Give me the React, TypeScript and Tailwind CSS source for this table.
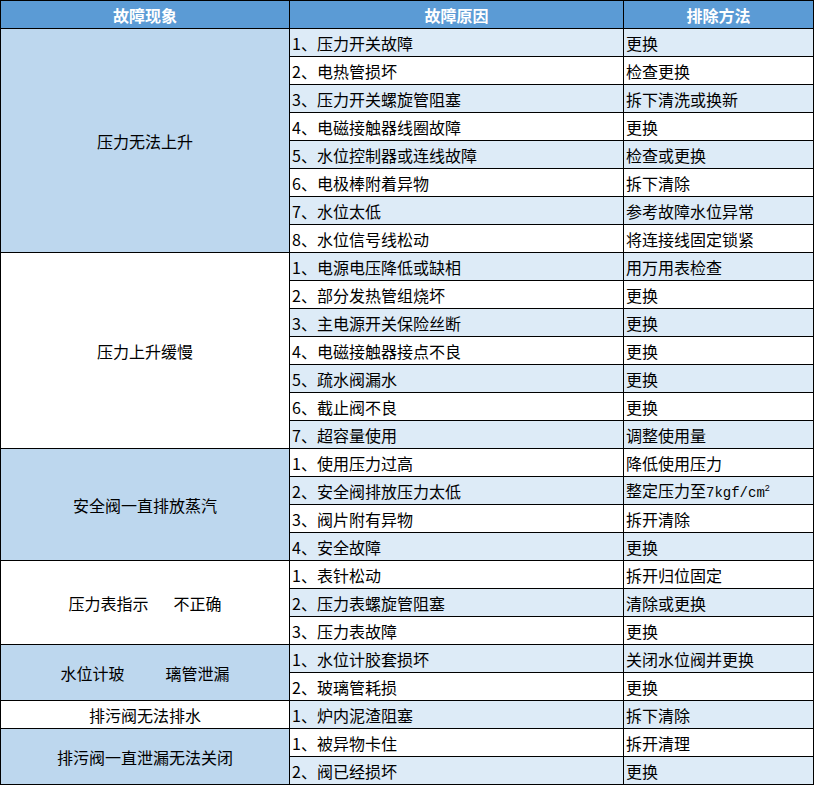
import React from 'react';

type Group = {
  symptom: React.ReactNode;
  span: string;
  rows: [React.ReactNode, React.ReactNode][];
};

const CM2 = (
  <>
    整定压力至
    <span className="font-['Liberation_Mono',monospace] text-[14px]">7kgf/cm</span>
    <sup className="relative -top-[6px] align-baseline text-[9px] font-['Liberation_Sans',sans-serif]">2</sup>
  </>
);

const groups: Group[] = [
  {
    symptom: '压力无法上升',
    span: 'row-span-8',
    rows: [
      ['1、压力开关故障', '更换'],
      ['2、电热管损坏', '检查更换'],
      ['3、压力开关螺旋管阻塞', '拆下清洗或换新'],
      ['4、电磁接触器线圈故障', '更换'],
      ['5、水位控制器或连线故障', '检查或更换'],
      ['6、电极棒附着异物', '拆下清除'],
      ['7、水位太低', '参考故障水位异常'],
      ['8、水位信号线松动', '将连接线固定锁紧'],
    ],
  },
  {
    symptom: '压力上升缓慢',
    span: 'row-span-7',
    rows: [
      ['1、电源电压降低或缺相', '用万用表检查'],
      ['2、部分发热管组烧坏', '更换'],
      ['3、主电源开关保险丝断', '更换'],
      ['4、电磁接触器接点不良', '更换'],
      ['5、疏水阀漏水', '更换'],
      ['6、截止阀不良', '更换'],
      ['7、超容量使用', '调整使用量'],
    ],
  },
  {
    symptom: '安全阀一直排放蒸汽',
    span: 'row-span-4',
    rows: [
      ['1、使用压力过高', '降低使用压力'],
      ['2、安全阀排放压力太低', CM2],
      ['3、阀片附有异物', '拆开清除'],
      ['4、安全故障', '更换'],
    ],
  },
  {
    symptom: (
      <>
        压力表指示<span className="inline-block w-[25px]" />不正确
      </>
    ),
    span: 'row-span-3',
    rows: [
      ['1、表针松动', '拆开归位固定'],
      ['2、压力表螺旋管阻塞', '清除或更换'],
      ['3、压力表故障', '更换'],
    ],
  },
  {
    symptom: (
      <>
        水位计玻<span className="inline-block w-[41px]" />璃管泄漏
      </>
    ),
    span: 'row-span-2',
    rows: [
      ['1、水位计胶套损坏', '关闭水位阀并更换'],
      ['2、玻璃管耗损', '更换'],
    ],
  },
  {
    symptom: '排污阀无法排水',
    span: 'row-span-1',
    rows: [['1、炉内泥渣阻塞', '拆下清除']],
  },
  {
    symptom: '排污阀一直泄漏无法关闭',
    span: 'row-span-2',
    rows: [
      ['1、被异物卡住', '拆开清理'],
      ['2、阀已经损坏', '更换'],
    ],
  },
];

export default function App() {
  let n = 0;
  return (
    <div className="font-['Noto_Sans_CJK_SC','Noto_Sans',sans-serif] text-[16px] leading-none text-black">
      <div className="grid w-[814px] auto-rows-[27px] grid-cols-[288px_333px_189px] gap-px border border-black bg-black">
        {/* header */}
        <div className="flex items-center justify-center bg-[#5b9bd5] font-bold text-white">故障现象</div>
        <div className="flex items-center justify-center bg-[#5b9bd5] font-bold text-white">故障原因</div>
        <div className="flex items-center justify-center bg-[#5b9bd5] font-bold text-white">排除方法</div>

        {groups.map((g, gi) => {
          const blue = gi % 2 === 0;
          return (
            <React.Fragment key={gi}>
              <div
                className={`${g.span} flex items-center justify-center whitespace-nowrap ${
                  blue ? 'bg-[#bdd7ee]' : 'bg-white'
                }`}
              >
                <span>{g.symptom}</span>
              </div>
              {g.rows.map(([cause, fix], ri) => {
                n += 1;
                const bg = n % 2 === 1 ? 'bg-[#ddebf7]' : 'bg-white';
                return (
                  <React.Fragment key={ri}>
                    <div className={`flex items-center whitespace-nowrap pl-[2px] ${bg}`}>
                      <span>{cause}</span>
                    </div>
                    <div className={`flex items-center whitespace-nowrap pl-[2px] ${bg}`}>
                      <span>{fix}</span>
                    </div>
                  </React.Fragment>
                );
              })}
            </React.Fragment>
          );
        })}
      </div>
    </div>
  );
}
